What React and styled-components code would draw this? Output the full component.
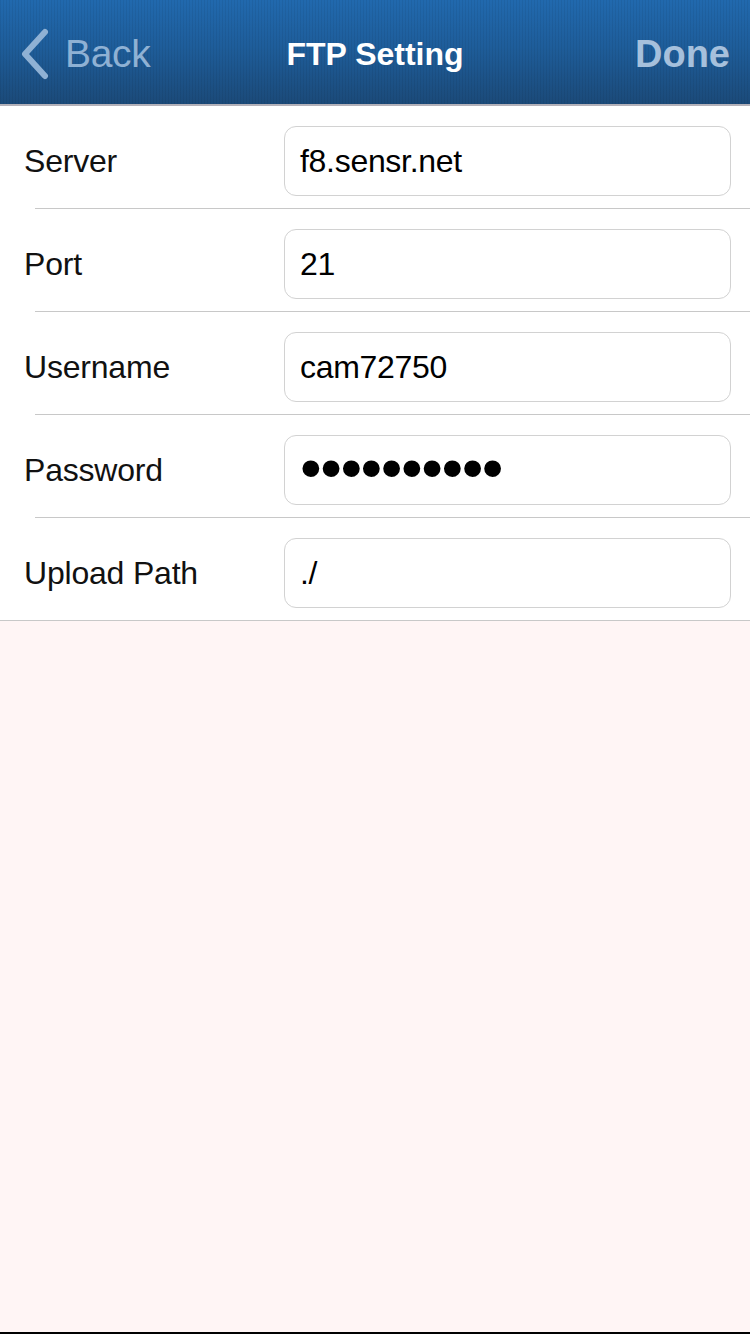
import React from "react";
import styled, { createGlobalStyle } from "styled-components";

const GlobalStyle = createGlobalStyle`
  html, body {
    margin: 0;
    padding: 0;
    background: #fff5f5;
  }
  body {
    font-family: "Liberation Sans", Arial, Helvetica, sans-serif;
  }
`;

const fields = [
  { label: "Server", value: "f8.sensr.net" },
  { label: "Port", value: "21" },
  { label: "Username", value: "cam72750" },
  { label: "Password", value: "••••••••••", secret: true },
  { label: "Upload Path", value: "./" },
];

export default function App() {
  return (
    <Screen>
      <GlobalStyle />
      <NavBar>
        <NavButton>
          <svg width="30" height="52" viewBox="0 0 30 52">
            <polyline
              points="25,4 5,26 25,48"
              fill="none"
              stroke="#8fb1d4"
              strokeWidth="6"
              strokeLinecap="round"
              strokeLinejoin="round"
            />
          </svg>
          <BackLabel>Back</BackLabel>
        </NavButton>
        <Title>FTP Setting</Title>
        <DoneButton>Done</DoneButton>
      </NavBar>

      <Form>
        {fields.map((f, i) => (
          <Row key={f.label} last={i === fields.length - 1}>
            <Label>{f.label}</Label>
            <Field>
              {f.secret ? <Dots>{f.value}</Dots> : <Value>{f.value}</Value>}
            </Field>
          </Row>
        ))}
      </Form>

      <Filler />
      <BottomEdge />
    </Screen>
  );
}

const Screen = styled.div`
  display: flex;
  flex-direction: column;
  min-height: 1334px;
  width: 750px;
  background: #fff5f5;
`;

const NavBar = styled.div`
  position: relative;
  height: 106px;
  display: flex;
  align-items: center;
  justify-content: space-between;
  padding: 4px 20px 0 20px;
  box-sizing: border-box;
  background:
    repeating-linear-gradient(
      to right,
      rgba(0, 0, 0, 0.06) 0px,
      rgba(0, 0, 0, 0.06) 1px,
      rgba(255, 255, 255, 0) 1px,
      rgba(255, 255, 255, 0) 3px
    ),
    linear-gradient(to bottom, #2169ae 0%, #1e5d9a 45%, #1b4a79 100%);
  border-bottom: 2px solid #b3b1b9;
`;

const NavButton = styled.div`
  display: flex;
  align-items: center;
  gap: 15px;
`;

const BackLabel = styled.span`
  font-size: 39px;
  color: #8fb1d4;
  letter-spacing: -0.3px;
`;

const Title = styled.span`
  position: absolute;
  left: 0;
  right: 0;
  top: 4px;
  bottom: 0;
  display: flex;
  align-items: center;
  justify-content: center;
  font-size: 32px;
  font-weight: bold;
  color: #ffffff;
  pointer-events: none;
`;

const DoneButton = styled.span`
  font-size: 38px;
  font-weight: bold;
  color: #a6c0dc;
  letter-spacing: 0px;
`;

const Form = styled.div`
  display: flex;
  flex-direction: column;
  background: #ffffff;
`;

const Row = styled.div`
  position: relative;
  display: flex;
  align-items: center;
  padding: 20px 19px 13px 24px;
  &::after {
    content: "";
    position: absolute;
    bottom: 0;
    left: ${(p) => (p.last ? "0" : "35px")};
    right: 0;
    height: 1px;
    background: #c8c8c8;
  }
`;

const Label = styled.div`
  width: 260px;
  font-size: 32px;
  color: #111111;
  letter-spacing: -0.2px;
`;

const Field = styled.div`
  flex: 1;
  height: 70px;
  box-sizing: border-box;
  border: 1px solid #d2d2d2;
  border-radius: 12px;
  display: flex;
  align-items: center;
  padding-left: 15px;
  background: #ffffff;
`;

const Value = styled.span`
  font-size: 32px;
  color: #000000;
  letter-spacing: -0.3px;
`;

const Dots = styled.span`
  font-size: 62px;
  line-height: 1;
  color: #000000;
  letter-spacing: -1.5px;
  margin-top: -4px;
`;

const Filler = styled.div`
  flex: 1;
  background: #fff5f5;
`;

const BottomEdge = styled.div`
  height: 2px;
  background: #000000;
`;
